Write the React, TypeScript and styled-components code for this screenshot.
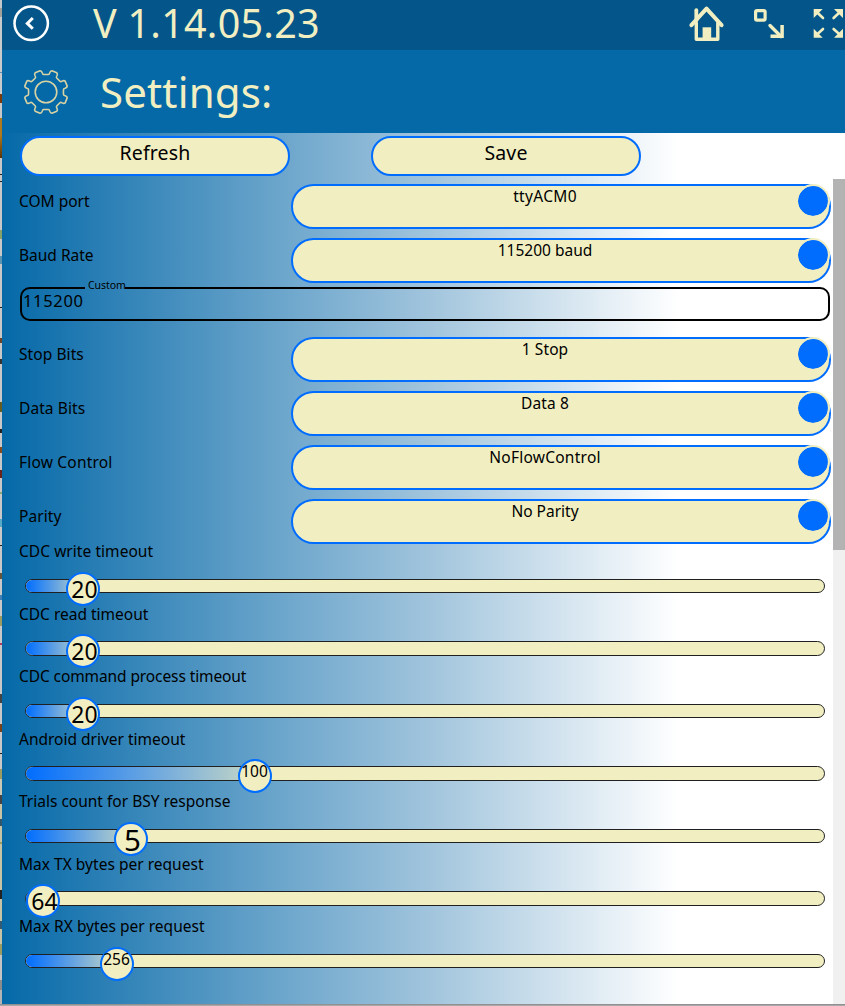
import React from 'react';
import styled, { createGlobalStyle } from 'styled-components';

const CREAM = '#f1efc1';
const BLUE = '#006dff';
const OCEAN = '#0569a8';

const GlobalStyle = createGlobalStyle`
  *, *::before, *::after { box-sizing: border-box; }
  body {
    margin: 0;
    overflow: hidden;
    color: #000;
    font-family: "Noto Sans", "Open Sans", sans-serif;
  }
`;

const Desktop = styled.div`
  display: flex;
  height: 1006px;
  width: 845px;
  overflow: hidden;
  background: linear-gradient(#858585, #b4b4b4) 0 100% / 100% 2px no-repeat #c4c4c4;
`;

const WindowEdge = styled.div`
  flex: none;
  width: 2px;
  height: 1004px;
  background: linear-gradient(
    #c4c8ca 0 8px, #a4a09a 8px 17px, #c8cacb 17px 72px, #5f8fb0 72px 73px, #c8cacb 73px 94px,
    #7b3a08 94px 103px, #c8c8c8 103px 118px, #b07a1c 118px 135px, #5c3306 158px,
    #c8c8c8 158px 174px, #222 174px 175px, #c8c8c8 175px 181px, #222 181px 182px,
    #c8c8c8 182px 230px, #86a169 230px 239px, #c8c8c8 239px 256px, #5b93b3 256px 264px,
    #c8c8c8 264px 307px, #222 307px 308px, #c8c8c8 308px 338px, #6e4426 338px 343px,
    #c8c8c8 343px 359px, #333 359px 364px, #c8c8c8 364px 402px, #665c20 402px 412px,
    #c8c8c8 412px 429px, #222 429px 433px, #c8c8c8 433px 447px, #8a4a20 447px 453px,
    #c8c8c8 453px 470px, #6b2218 470px 478px, #c8c8c8 478px 492px, #8aa874 492px 494px,
    #c8c8c8 494px 519px, #58a9c8 519px 527px, #c8c8c8 527px 545px, #222 545px 546px,
    #c8c8c8 546px 573px, #665538 573px 579px, #c8c8c8 579px 595px, #4380b5 595px 600px,
    #c8c8c8 600px 616px, #9b9b62 616px 626px, #c8c8c8 626px 643px, #b13a62 643px 645px,
    #c8c8c8 645px 694px, #444 694px 703px, #c8c8c8 703px 724px, #7a4218 724px 732px,
    #c8c8c8 732px 753px, #222 753px 754px, #c8c8c8 754px 769px, #9b9b62 769px 779px,
    #c8c8b4 779px 795px, #444 795px 804px, #c8c3a4 804px 819px, #31566b 819px 826px,
    #c8c3a4 826px 842px, #9b9b62 842px 844px, #c8c3a4 844px 890px, #222 890px 899px,
    #c8c3a4 899px 921px, #325c74 921px 929px, #c8c3a4 929px 944px, #9b9b62 944px 955px,
    #c4c4c4 955px 980px, #8c8c8c 980px 990px, #b4b4b4 990px
  );
`;

const AppWindow = styled.main`
  display: flex;
  flex-direction: column;
  flex: none;
  width: 843px;
  height: 1004px;
  background: linear-gradient(to right, ${OCEAN} 0, #70a8cd 290px, #a2c5dd 430px, #fff 676px);
`;

const TitleBar = styled.header`
  display: flex;
  align-items: flex-start;
  flex: none;
  height: 50px;
  background: #04568a;
`;

const Banner = styled.section`
  display: flex;
  align-items: center;
  flex: none;
  height: 83px;
  padding-left: 21px;
  background: ${OCEAN};
`;

const Glyph = styled.svg`
  display: block;
  flex: none;
  overflow: visible;
`;

const Version = styled.h1`
  flex: 1;
  margin: 0 0 0 43px;
  color: ${CREAM};
  font-size: 39.5px;
  font-weight: 400;
  line-height: 46px;
  letter-spacing: 0.25px;
`;

const Tools = styled.div`
  display: flex;
  align-items: flex-start;
  flex: none;
  gap: 24px;
  padding: 5px 1px 0 0;
`;

const PageTitle = styled.h2`
  margin: 0 0 0 31px;
  color: ${CREAM};
  font-size: 42px;
  font-weight: 400;
  line-height: 83px;
  letter-spacing: 0.15px;
`;

const Actions = styled.div`
  display: flex;
  flex: none;
  gap: 81px;
  height: 46px;
  padding: 3px 0 0 18px;
`;

const PillButton = styled.button`
  display: flex;
  justify-content: center;
  align-items: flex-start;
  width: 270px;
  height: 40px;
  padding: 0;
  border: 2px solid ${BLUE};
  border-radius: 20px;
  background: ${CREAM};
  color: #000;
  font: inherit;
  font-size: 19.5px;
  line-height: 29px;
  letter-spacing: 0.15px;
`;

const Scroller = styled.div`
  display: flex;
  flex: 1;
  min-height: 0;
`;

const Form = styled.div`
  width: 831px;
  padding: 5px 2px 0 17px;
`;

const ScrollTrack = styled.div`
  width: 12px;
  background: #f0f0f0;
`;

const ScrollThumb = styled.div`
  height: 371px;
  background: #b3b3b3;
`;

const Field = styled.div`
  display: flex;
  height: 45px;
  margin-bottom: 9px;
  &:last-child { margin-bottom: 0; }
`;

const Label = styled.span<{ $track?: number }>`
  width: 272px;
  font-size: 15.5px;
  line-height: 34px;
  letter-spacing: ${p => p.$track ?? 0}px;
  white-space: nowrap;
`;

const Combo = styled.div<{ $track?: number }>`
  position: relative;
  width: 540px;
  height: 45px;
  padding-right: 32px;
  border: 2px solid ${BLUE};
  border-radius: 22.5px;
  background: ${CREAM};
  font-size: 15.5px;
  line-height: 21px;
  letter-spacing: ${p => p.$track ?? 0}px;
  text-align: center;
`;

const ComboDot = styled.i`
  position: absolute;
  top: -2.5px;
  right: -0.5px;
  width: 34px;
  height: 34px;
  border: 2.5px solid ${CREAM};
  border-radius: 50%;
  background: ${BLUE};
  background-clip: padding-box;
`;

const CustomField = styled.div`
  position: relative;
  width: 810px;
  height: 34px;
  margin: -5px 0 16px 1px;
  padding-left: 1px;
  border: 2px solid #000;
  border-radius: 10px;
  font-size: 16.5px;
  line-height: 23px;
  letter-spacing: 0.66px;
`;

const Legend = styled.span`
  position: absolute;
  top: -12px;
  left: 63px;
  padding-left: 3px;
  width: 40px;
  height: 16px;
  font-size: 10.5px;
  line-height: 16px;
  letter-spacing: -0.06px;
`;

const LegendGap = styled.span`
  position: absolute;
  top: -2px;
  left: 63px;
  width: 40px;
  height: 2px;
  background: linear-gradient(to right, #267bb3, #3583b7);
`;

const SliderRow = styled.div`
  height: 62.5px;
`;

const SliderName = styled.div<{ $track?: number }>`
  height: 34.5px;
  font-size: 15.5px;
  line-height: 15px;
  letter-spacing: ${p => p.$track ?? 0}px;
`;

const Track = styled.div`
  position: relative;
  width: 800.5px;
  height: 14.5px;
  margin-left: 5.5px;
  border: 1px solid #202020;
  border-radius: 7.5px;
  background: ${CREAM};
`;

const Fill = styled.div`
  height: 100%;
  border-radius: 7px 0 0 7px;
  background: linear-gradient(to right, ${BLUE}, #c5d7c5);
`;

const Knob = styled.div<{ $size: number; $line: number; $shift: number }>`
  position: absolute;
  top: -8px;
  display: flex;
  justify-content: center;
  width: 34px;
  height: 34px;
  border: 2px solid ${BLUE};
  border-radius: 50%;
  background: ${CREAM};
  font-size: ${p => p.$size}px;
  line-height: ${p => p.$line}px;
  text-indent: ${p => p.$shift}px;
  white-space: nowrap;
`;

const knobText = {
  three: { $size: 15.5, $line: 21, $shift: -1 },
  two: { $size: 23, $line: 30, $shift: 4 },
  one: { $size: 29.5, $line: 31, $shift: 4 },
};

type Choice = { label: string; value: string; labelTrack?: number; valueTrack?: number };

const portFields: Choice[] = [
  { label: 'COM port', value: 'ttyACM0', valueTrack: 0.33 },
  { label: 'Baud Rate', value: '115200 baud' },
];

const lineFields: Choice[] = [
  { label: 'Stop Bits', value: '1 Stop', labelTrack: 0.08, valueTrack: 0.1 },
  { label: 'Data Bits', value: 'Data 8', labelTrack: 0.08, valueTrack: 0.1 },
  { label: 'Flow Control', value: 'NoFlowControl', labelTrack: 0.2, valueTrack: 0.25 },
  { label: 'Parity', value: 'No Parity', labelTrack: 0.1 },
];

const sliders: { name: string; value: string; at: number; kind: keyof typeof knobText; track?: number }[] = [
  { name: 'CDC write timeout', value: '20', at: 58, kind: 'two', track: 0.05 },
  { name: 'CDC read timeout', value: '20', at: 58, kind: 'two' },
  { name: 'CDC command process timeout', value: '20', at: 58, kind: 'two', track: -0.1 },
  { name: 'Android driver timeout', value: '100', at: 230.5, kind: 'three' },
  { name: 'Trials count for BSY response', value: '5', at: 106, kind: 'one' },
  { name: 'Max TX bytes per request', value: '64', at: 18, kind: 'two', track: 0.02 },
  { name: 'Max RX bytes per request', value: '256', at: 92.5, kind: 'three', track: 0.02 },
];

const gearPath = (() => {
  const at = (deg: number, r: number) => {
    const a = (deg * Math.PI) / 180;
    return `${(23 + r * Math.sin(a)).toFixed(2)} ${(23 - r * Math.cos(a)).toFixed(2)}`;
  };
  let d = '';
  for (let i = 0; i < 8; i++) {
    const c = i * 45 + 22.5;
    d += `${i ? 'L' : 'M'}${at(c - 15, 17.6)}Q${at(c - 11.5, 17.8)} ${at(c - 11.5, 19.5)}`;
    d += `Q${at(c - 11, 21.6)} ${at(c - 7, 22)}L${at(c + 7, 22)}`;
    d += `Q${at(c + 11, 21.6)} ${at(c + 11.5, 19.5)}Q${at(c + 11.5, 17.8)} ${at(c + 15, 17.6)}`;
  }
  return d + 'Z';
})();

const BackIcon = () => (
  <Glyph width="38" height="38" viewBox="0 0 38 38" fill="none" stroke="#fff">
    <circle cx="19.2" cy="19.3" r="16.7" strokeWidth="2.5" />
    <path d="M20.8 14 15.3 19.4 20.8 24.8" strokeWidth="3" />
  </Glyph>
);

const GearIcon = () => (
  <Glyph width="46" height="46" viewBox="0 0 46 46" fill="none" stroke="#d9d3a3" strokeWidth="1.6" strokeLinejoin="round">
    <path d={gearPath} />
    <circle cx="23" cy="23" r="10.8" />
  </Glyph>
);

const HomeIcon = () => (
  <Glyph width="36" height="38" viewBox="0 0 36 38" fill="none" stroke={CREAM} strokeWidth="3.4" strokeLinejoin="round" strokeLinecap="round">
    <path d="M3.4 20.2 18.5 3.6 33.6 20.2" strokeWidth="4" />
    <path d="M8.3 15.5V5.2" strokeWidth="3.8" />
    <path d="M8.3 18V34.3H29.8V18" />
    <path d="M14.6 34V22.3H23.2V34Z" fill={CREAM} stroke="none" />
  </Glyph>
);

const ResizeIcon = () => (
  <Glyph width="36" height="38" viewBox="0 0 36 38" fill="none" stroke={CREAM} strokeWidth="3.2">
    <rect x="7.6" y="5.6" width="9.5" height="9.5" rx="1.4" />
    <path d="M22 20.5 33 31.5" strokeWidth="3.4" strokeLinecap="round" />
    <path d="M34.1 20V31.2H22.5" strokeWidth="3.5" />
  </Glyph>
);

const ExpandIcon = () => (
  <Glyph width="36" height="38" viewBox="0 0 36 38" fill={CREAM} stroke={CREAM} strokeWidth="2.6" strokeLinecap="round">
    <path d="M8.7 7 15 13M32 7 25.6 13M8.7 29.8 15 24M32 29.8 25.6 24" />
    <path d="M5.7 4h9L5.7 13ZM35 4h-9l9 9ZM5.7 32.8h9L5.7 23.8ZM35 32.8h-9l9-9Z" stroke="none" />
  </Glyph>
);

const IconSlot = styled.div`
  padding: 4px 0 0 10px;
`;

const ChoiceRow = ({ label, value, labelTrack, valueTrack }: Choice) => (
  <Field>
    <Label $track={labelTrack}>{label}</Label>
    <Combo $track={valueTrack}>
      {value}
      <ComboDot />
    </Combo>
  </Field>
);

export default function App() {
  return (
    <Desktop>
      <GlobalStyle />
      <WindowEdge />
      <AppWindow>
        <TitleBar>
          <IconSlot><BackIcon /></IconSlot>
          <Version>V 1.14.05.23</Version>
          <Tools>
            <HomeIcon />
            <ResizeIcon />
            <ExpandIcon />
          </Tools>
        </TitleBar>
        <Banner>
          <GearIcon />
          <PageTitle>Settings:</PageTitle>
        </Banner>
        <Actions>
          <PillButton>Refresh</PillButton>
          <PillButton>Save</PillButton>
        </Actions>
        <Scroller>
          <Form>
            {portFields.map(f => <ChoiceRow key={f.label} {...f} />)}
            <CustomField>
              <LegendGap />
              <Legend>Custom</Legend>
              115200
            </CustomField>
            <div>{lineFields.map(f => <ChoiceRow key={f.label} {...f} />)}</div>
            {sliders.map(s => (
              <SliderRow key={s.name}>
                <SliderName $track={s.track}>{s.name}</SliderName>
                <Track>
                  <Fill style={{ width: s.at }} />
                  <Knob {...knobText[s.kind]} style={{ left: s.at - 18 }}>{s.value}</Knob>
                </Track>
              </SliderRow>
            ))}
          </Form>
          <ScrollTrack><ScrollThumb /></ScrollTrack>
        </Scroller>
      </AppWindow>
    </Desktop>
  );
}
